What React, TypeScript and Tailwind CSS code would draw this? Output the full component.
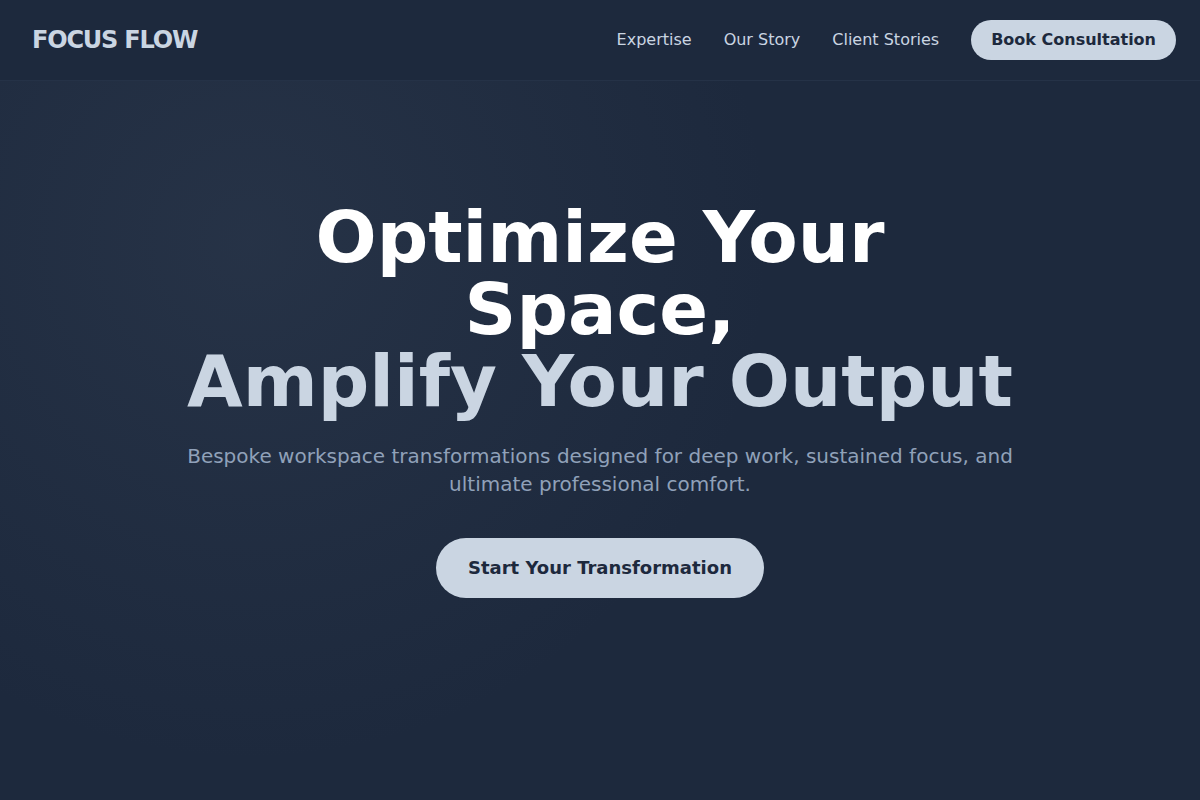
import React from 'react';

const navLinks = ['Expertise', 'Our Story', 'Client Stories'];

const Header: React.FC = () => (
  <header className="h-[81px] flex items-center justify-between pl-8 pr-6 border-b border-slate-700/40">
    <div className="text-2xl font-bold text-slate-300 tracking-tighter">FOCUS FLOW</div>
    <nav className="flex items-center">
      {navLinks.map((link) => (
        <a key={link} href="#" className="text-base text-slate-300 mr-8">
          {link}
        </a>
      ))}
      <button className="bg-slate-300 text-slate-800 font-bold text-base px-5 py-2 rounded-full">
        Book Consultation
      </button>
    </nav>
  </header>
);

const Hero: React.FC = () => (
  <section className="flex-grow flex flex-col items-center pt-[120px] px-8 text-center bg-[radial-gradient(circle_520px_at_250px_160px,rgba(71,85,105,0.22),transparent)]">
    <h1 className="text-7xl leading-none font-bold max-w-[840px]">
      <span className="text-white">Optimize Your Space,</span>
      <br />
      <span className="text-slate-300">Amplify Your Output</span>
    </h1>
    <p className="mt-[25px] text-xl text-slate-400 max-w-[840px]">
      Bespoke workspace transformations designed for deep work, sustained focus, and ultimate professional comfort.
    </p>
    <button className="mt-10 bg-slate-300 text-slate-800 font-bold text-lg px-8 py-4 rounded-full">
      Start Your Transformation
    </button>
  </section>
);

const App: React.FC = () => {
  return (
    <div className="min-h-screen flex flex-col bg-slate-800 font-['DejaVu_Sans',sans-serif]">
      <Header />
      <Hero />
    </div>
  );
};

export default App;
